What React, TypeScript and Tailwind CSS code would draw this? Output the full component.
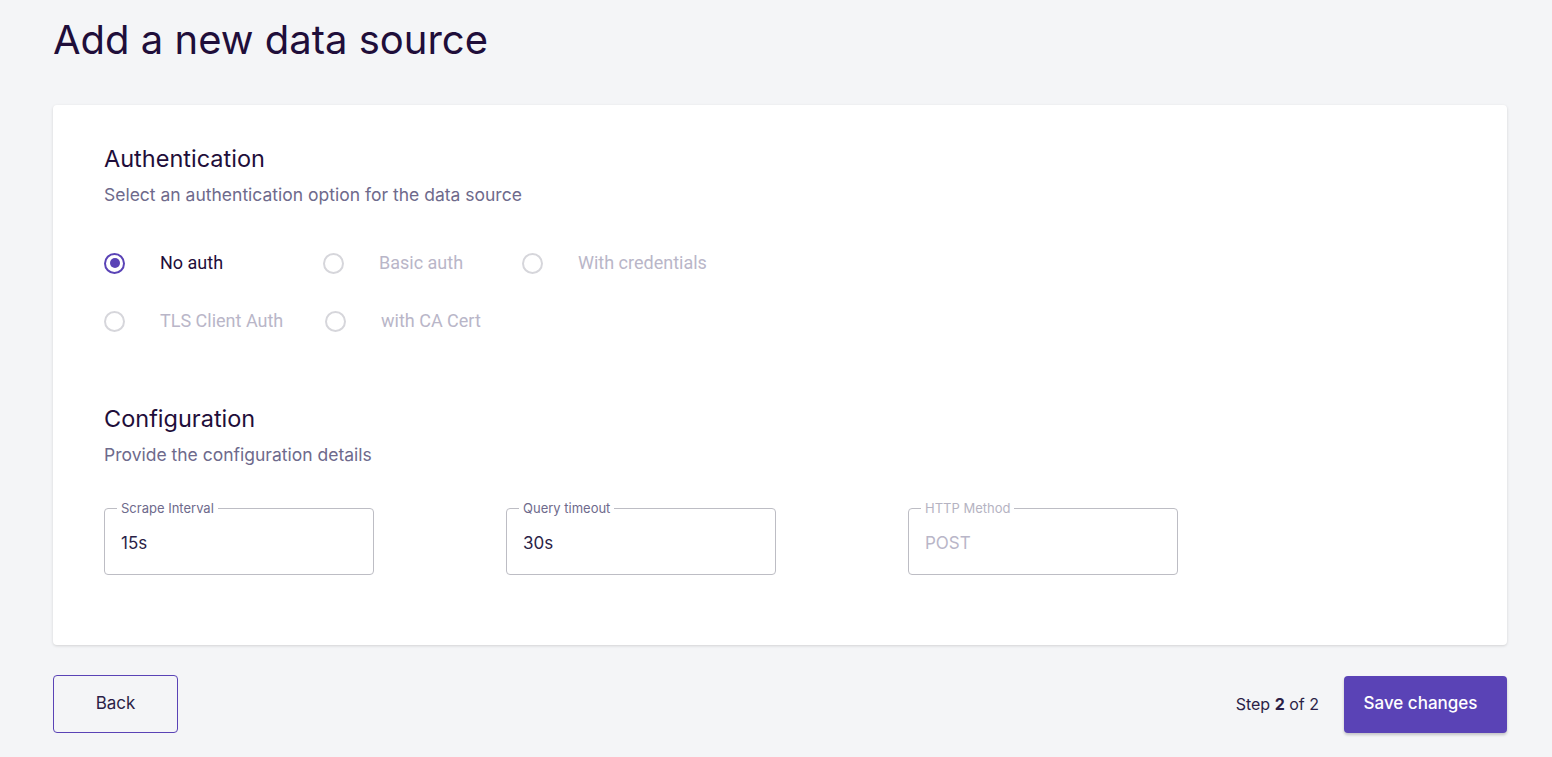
import React from "react";

const options = [
  [
    { label: "No auth", checked: true, w: "w-[219px]" },
    { label: "Basic auth", w: "w-[199px]" },
    { label: "With credentials", w: "" },
  ],
  [
    { label: "TLS Client Auth", w: "w-[221px]" },
    { label: "with CA Cert", w: "" },
  ],
];

function Radio({ label, checked, w }: { label: string; checked?: boolean; w: string }) {
  return (
    <label className={`flex items-center h-[22px] ${w}`}>
      <span
        className={`w-[21px] h-[21px] rounded-full border-2 flex items-center justify-center ${
          checked ? "border-[#5a43b6]" : "border-[#d6d6db]"
        }`}
      >
        {checked && <span className="w-[10px] h-[10px] rounded-full bg-[#5a43b6]" />}
      </span>
      <span
        className={`ml-[35px] text-[18px] leading-[22px] font-['Roboto',sans-serif] ${
          checked ? "text-[#1f0e3a]" : "text-[#b9b6c8]"
        }`}
      >
        {label}
      </span>
    </label>
  );
}

function Field({ label, value, disabled }: { label: string; value: string; disabled?: boolean }) {
  return (
    <fieldset className="w-[270px] h-[73px] border border-[#bdbdc4] rounded-[4px] px-4 m-0">
      <legend className={`px-[4px] ml-[-4px] text-[13px] leading-none ${disabled ? "text-[#b5b3c2]" : "text-[#6e6a8c]"}`}>
        {label}
      </legend>
      <div className={`mt-[16px] text-[17px] ${disabled ? "text-[#b9b6c8]" : "text-[#2b1f47]"}`}>{value}</div>
    </fieldset>
  );
}

export default function App() {
  return (
    <div className="min-h-[757px] bg-[#f4f5f7] font-['Inter',sans-serif] pl-[53px] pr-[45px] pt-[14px]">
      <h1 className="text-[40px] leading-[52px] text-[#1f0e3a]">Add a new data source</h1>

      <div className="mt-[39px] bg-white rounded-[4px] shadow-[0_1px_3px_rgba(0,0,0,0.14)] pl-[51px] pt-[39px] h-[540px]">
        <h2 className="text-[23.5px] leading-[30px] text-[#1f0e3a]">Authentication</h2>
        <p className="mt-[9px] text-[17.5px] leading-[24px] text-[#6e6a8c]">
          Select an authentication option for the data source
        </p>

        <div className="mt-[45px] flex flex-col gap-[36px]">
          {options.map((row, i) => (
            <div key={i} className="flex items-center">
              {row.map((o) => (
                <Radio key={o.label} {...o} />
              ))}
            </div>
          ))}
        </div>

        <h2 className="mt-[72px] text-[23.5px] leading-[30px] text-[#1f0e3a]">Configuration</h2>
        <p className="mt-[9px] text-[17.5px] leading-[24px] text-[#6e6a8c]">Provide the configuration details</p>

        <div className="mt-[35px] flex gap-[132px]">
          <Field label="Scrape Interval" value="15s" />
          <Field label="Query timeout" value="30s" />
          <Field label="HTTP Method" value="POST" disabled />
        </div>
      </div>

      <div className="mt-[30px] flex items-center justify-between">
        <button className="w-[125px] h-[58px] border border-[#5a43b6] rounded-[4px] text-[17px] text-[#2b1f47]">
          Back
        </button>
        <div className="flex items-center">
          <span className="text-[16px] text-[#2b1f47]">
            Step <b className="font-bold">2</b> of 2
          </span>
          <button className="ml-[25px] w-[163px] h-[57px] pr-[10px] bg-[#5a43b6] rounded-[4px] text-white text-[17px] font-medium shadow-[0_2px_3px_rgba(0,0,0,0.2)]">
            Save changes
          </button>
        </div>
      </div>
    </div>
  );
}
